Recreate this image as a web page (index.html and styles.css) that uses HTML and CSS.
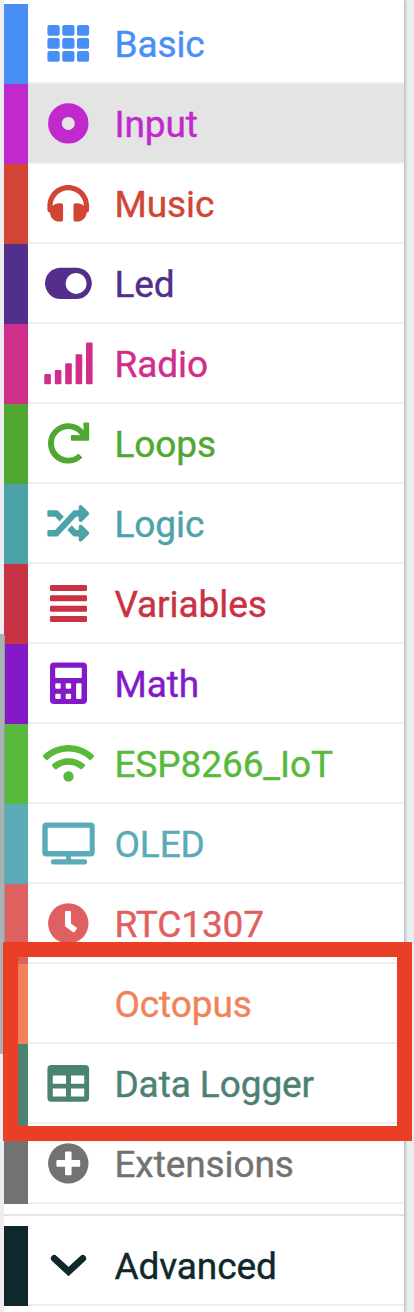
FILE: index.html
```html
<!DOCTYPE html>
<html lang="en">
<head>
<meta charset="utf-8">
<title>Toolbox</title>
<link rel="stylesheet" href="styles.css">
</head>
<body>
<div class="page">
<nav class="toolbox">
<div class="row basic"><svg class="icon" viewBox="28 0 87 80"><rect x="47.4" y="21" width="12.3" height="10.8" rx="2"/><rect x="62.2" y="21" width="12.3" height="10.8" rx="2"/><rect x="77" y="21" width="12.1" height="10.8" rx="2"/><rect x="47.4" y="34" width="12.3" height="10.8" rx="2"/><rect x="62.2" y="34" width="12.3" height="10.8" rx="2"/><rect x="77" y="34" width="12.1" height="10.8" rx="2"/><rect x="47.4" y="47" width="12.3" height="10.8" rx="2"/><rect x="62.2" y="47" width="12.3" height="10.8" rx="2"/><rect x="77" y="47" width="12.1" height="10.8" rx="2"/></svg><span class="label">Basic</span></div>
<div class="row input selected"><svg class="icon" viewBox="28 0 87 80"><circle class="ring" cx="68.3" cy="39.4" r="13.35"/></svg><span class="label">Input</span></div>
<div class="row music"><svg class="icon" viewBox="28 0 87 80"><path transform="translate(47.4 18.5) scale(.0815)" d="M256 32C114.52 32 0 146.497 0 288v48a32 32 0 0 0 17.689 28.622l14.383 7.191C34.083 431.903 83.421 480 144 480h24c13.255 0 24-10.745 24-24V280c0-13.255-10.745-24-24-24h-24c-31.342 0-59.671 12.879-80 33.627V288c0-105.869 86.131-192 192-192s192 86.131 192 192v1.627C427.671 268.879 399.342 256 368 256h-24c-13.255 0-24 10.745-24 24v176c0 13.255 10.745 24 24 24h24c60.579 0 109.917-48.098 111.928-108.187l14.382-7.191A32 32 0 0 0 512 336v-48c0-141.479-114.496-256-256-256z"/></svg><span class="label">Music</span></div>
<div class="row led"><svg class="icon" viewBox="28 0 87 80"><rect x="45" y="23.7" width="46.8" height="31.3" rx="15.65"/><circle class="cut" cx="76.1" cy="39.4" r="10.5"/></svg><span class="label">Led</span></div>
<div class="row radio"><svg class="icon" viewBox="28 0 87 80"><rect x="44.3" y="50" width="6.6" height="10.2" rx="1"/><rect x="54.8" y="46" width="6.6" height="14.2" rx="1"/><rect x="65.2" y="39.3" width="6.6" height="20.9" rx="1"/><rect x="75.6" y="30.3" width="6.6" height="29.9" rx="1"/><rect x="86" y="18.6" width="6.6" height="41.6" rx="1"/></svg><span class="label">Radio</span></div>
<div class="row loops"><svg class="icon" viewBox="28 0 87 80"><path transform="translate(47.4 18.5) scale(.0815)" d="M500.33 0h-47.41a12 12 0 0 0-12 12.57l4 82.76A247.42 247.42 0 0 0 256 8C119.34 8 7.9 119.53 8 256.19 8.1 393.07 119.1 504 256 504a247.1 247.1 0 0 0 166.18-63.91 12 12 0 0 0 .48-17.43l-34-34a12 12 0 0 0-16.38-.55A176 176 0 1 1 402.1 157.8l-101.53-4.87a12 12 0 0 0-12.57 12v47.41a12 12 0 0 0 12 12h200.33a12 12 0 0 0 12-12V12a12 12 0 0 0-12-12z"/></svg><span class="label">Loops</span></div>
<div class="row logic"><svg class="icon" viewBox="28 0 87 80"><path transform="translate(47.4 18.5) scale(.0815)" d="M504.971 359.029c9.373 9.373 9.373 24.569 0 33.941l-80 79.984c-15.01 15.01-40.971 4.49-40.971-16.971V416h-58.785a12.004 12.004 0 0 1-8.773-3.812l-70.556-75.596 53.333-57.143L352 336h32v-39.981c0-21.438 25.943-31.998 40.971-16.971l80 79.981zM12 176h84l52.781 56.551 53.333-57.143-70.556-75.596A11.999 11.999 0 0 0 122.785 96H12c-6.627 0-12 5.373-12 12v56c0 6.627 5.373 12 12 12zm372 0v39.984c0 21.46 25.961 31.98 40.971 16.971l80-79.984c9.373-9.373 9.373-24.569 0-33.941l-80-79.981C409.943 24.021 384 34.582 384 56.019V96h-58.785a12.004 12.004 0 0 0-8.773 3.812L96 336H12c-6.627 0-12 5.373-12 12v56c0 6.627 5.373 12 12 12h110.785c3.326 0 6.503-1.381 8.773-3.812L352 176h32z"/></svg><span class="label">Logic</span></div>
<div class="row variables"><svg class="icon" viewBox="28 0 87 80"><rect x="50" y="21" width="37" height="6" rx="1.2"/><rect x="50" y="31.3" width="37" height="6" rx="1.2"/><rect x="50" y="41.7" width="37" height="6" rx="1.2"/><rect x="50" y="52" width="37" height="6" rx="1.2"/></svg><span class="label">Variables</span></div>
<div class="row math"><svg class="icon" viewBox="28 0 87 80"><rect x="50" y="18.5" width="37" height="41.6" rx="4"/><g class="cut"><rect x="55.2" y="23.8" width="26.6" height="10.3" rx="1"/><rect x="55.3" y="39.3" width="5.4" height="5.4" rx="1"/><rect x="65.7" y="39.3" width="5.4" height="5.4" rx="1"/><rect x="55.3" y="49.7" width="5.4" height="5.4" rx="1"/><rect x="65.7" y="49.7" width="5.4" height="5.4" rx="1"/><rect x="76.1" y="39.3" width="5.4" height="15.8" rx="1"/></g></svg><span class="label">Math</span></div>
<div class="row iot"><svg class="icon" viewBox="28 0 87 80"><path transform="translate(42.9 18.5) scale(.08 .0815)" d="M634.91 154.88C457.74-8.99 182.19-8.93 5.09 154.88c-6.66 6.16-6.79 16.59-.35 22.98l34.24 33.97c6.14 6.1 16.02 6.23 22.4.38 145.92-133.68 371.3-133.71 517.25 0 6.38 5.85 16.26 5.71 22.4-.38l34.24-33.97c6.43-6.39 6.3-16.82-.36-22.98zM320 352c-35.35 0-64 28.65-64 64s28.65 64 64 64 64-28.65 64-64-28.65-64-64-64zm202.67-83.59c-115.26-101.93-290.21-101.82-405.34 0-6.9 6.1-7.12 16.69-.57 23.15l34.44 33.99c6 5.92 15.66 6.32 22.05.8 83.95-72.57 209.74-72.41 293.49 0 6.39 5.52 16.05 5.13 22.05-.8l34.44-33.99c6.56-6.46 6.33-17.06-.56-23.15z"/></svg><span class="label">ESP8266_IoT</span></div>
<div class="row oled"><svg class="icon" viewBox="28 0 87 80"><rect x="42.3" y="18.4" width="52.4" height="34" rx="4"/><rect class="cut" x="47.7" y="23.7" width="42" height="23.4" rx=".8"/><path d="M66 52h5v3.2h13.5a2.5 2.5 0 0 1 0 5.2h-31a2.5 2.5 0 0 1 0-5.2H66z"/></svg><span class="label">OLED</span></div>
<div class="row rtc"><svg class="icon" viewBox="28 0 87 80"><circle cx="68.3" cy="39.4" r="20.2"/><path class="cut" d="M66 27h4q1 0 1 1v11.5l5.6 4.1q.8.6.2 1.4l-2.4 3q-.6.8-1.4.2l-7.2-5.4q-.8-.6-.8-1.6V28q0-1 1-1z"/></svg><span class="label">RTC1307</span></div>
<div class="row octopus"><span class="icon"></span><span class="label">Octopus</span></div>
<div class="row logger"><svg class="icon" viewBox="28 0 87 80"><rect x="47.4" y="21" width="41.7" height="36.7" rx="4"/><path class="cut" d="M52.8 31.4H66v8.3H52.8zM71 31.4h13.2v8.3H71zM52.8 44.4H66v8.1H52.8zM71 44.4h13.2v8.1H71z"/></svg><span class="label">Data Logger</span></div>
<div class="row extensions"><svg class="icon" viewBox="28 0 87 80"><circle cx="68.3" cy="39.4" r="20.2"/><path class="cut" d="M66 27.5h4.6q1 0 1 1v7.6h7.6q1 0 1 1v4.6q0 1-1 1h-7.6v7.6q0 1-1 1H66q-1 0-1-1v-7.6h-7.6q-1 0-1-1v-4.6q0-1 1-1H65v-7.6q0-1 1-1z" transform="translate(0 0)"/></svg><span class="label">Extensions</span></div>
<div class="separator"></div>
<div class="row advanced"><svg class="icon" viewBox="28 0 87 80"><path class="chevron" d="M54.3 32.4L68.5 45.6 82.7 32.4"/></svg><span class="label">Advanced</span></div>
</nav>
<div class="scrollbar"></div>
<div class="highlight"></div>
</div>
</body>
</html>
```
FILE: styles.css
```css
body {
  margin: 0;
  background: #e9eef0;
  font-family: Roboto, sans-serif;
}

.page {
  position: relative;
  height: 1312px;
  overflow: hidden;
}

.toolbox {
  box-sizing: border-box;
  width: 404px;
  height: 1312px;
  padding-top: 4px;
  border-left: 4px solid #eeeef2;
  background: #fff;
  box-shadow: 0 0 4px rgba(0, 0, 0, .45);
}

.row {
  display: flex;
  align-items: center;
  height: 80px;
  background: linear-gradient(#ebefef, #ebefef) 24px 78px / 376px 2px no-repeat;
}

.row::before {
  content: "";
  flex: none;
  width: 24px;
  height: 80px;
  background: currentColor;
}

.selected {
  background-color: #e4e4e4;
}

.icon {
  flex: none;
  width: 87px;
  height: 80px;
  fill: currentColor;
}

.cut {
  fill: #fff;
}

.ring {
  fill: none;
  stroke: currentColor;
  stroke-width: 13.7;
}

.chevron {
  fill: none;
  stroke: currentColor;
  stroke-width: 6.8;
  stroke-linecap: round;
}

.label {
  margin-left: -.6px;
  padding-top: 2px;
  font-size: 37px;
  line-height: 80px;
  letter-spacing: -.08px;
  white-space: nowrap;
  -webkit-text-stroke: .4px currentColor;
}

.separator {
  height: 2px;
  margin: 10px 0;
  background: #e5e5e5;
}

.basic { color: #478ff7; }
.input { color: #c02acd; }
.music { color: #d24433; }
.led { color: #532f8b; }
.radio { color: #d12e8b; }
.loops { color: #4fa831; }
.logic { color: #4ba2a7; }
.variables { color: #c93243; }
.math { color: #8419c8; }
.iot { color: #58b93c; }
.oled { color: #58abb7; }
.rtc { color: #e05f60; }
.octopus { color: #f0835a; }
.logger { color: #4c8272; }
.extensions { color: #727272; }
.advanced { color: #10282c; }

.scrollbar {
  position: absolute;
  left: 0;
  top: 634px;
  box-sizing: border-box;
  width: 5px;
  height: 420px;
  border-right: 1px solid #929d9f;
  border-top-right-radius: 2px;
  background: #a9b3b5;
}

.highlight {
  position: absolute;
  left: 3px;
  top: 942px;
  box-sizing: border-box;
  width: 409px;
  height: 199px;
  border: 15px solid #ea3f25;
}
```
